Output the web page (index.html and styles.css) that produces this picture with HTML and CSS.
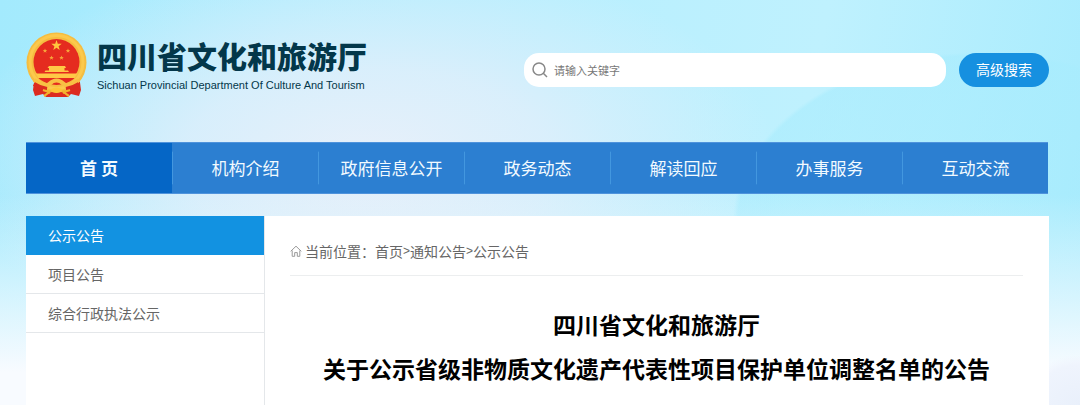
FILE: index.html
```html
<!DOCTYPE html>
<html lang="zh-CN">
<head>
<meta charset="utf-8">
<meta name="viewport" content="width=device-width, initial-scale=1">
<title>四川省文化和旅游厅</title>
<link rel="stylesheet" href="styles.css">
</head>
<body>
<div class="page">
  <header class="header">
    <a class="brand" href="#">
      <svg class="emblem" viewBox="0 0 62 66" aria-hidden="true">
        <path d="M9 43 7 58 9 64 17 62 20 65H42L45 62 53 64 55 58 53 43Z" fill="#dc2b20"/>
        <circle cx="30.500" cy="30.500" r="30" fill="#f5bd40"/>
        <circle cx="30.500" cy="30" r="26.500" fill="none" stroke="#fcc94c" stroke-width="3"/>
        <circle cx="30.500" cy="30" r="23" fill="#e52b1f"/>
        <path d="M30.500 8l1.300 3.700 3.900.1-3.100 2.400 1.100 3.800-3.200-2.200-3.200 2.200 1.100-3.800-3.100-2.400 3.900-.1z" fill="#ffc63e"/>
        <path d="M19 16.500l.6 1.500 1.700.1-1.300 1 .4 1.600-1.400-.9-1.400.9.400-1.600-1.300-1 1.700-.1zM42 16.500l.6 1.500 1.700.1-1.300 1 .4 1.600-1.400-.9-1.400.9.400-1.600-1.300-1 1.700-.1zM25.500 23.500l.6 1.500 1.700.1-1.300 1 .4 1.600-1.400-.9-1.400.9.400-1.600-1.300-1 1.700-.1zM35.500 23.500l.6 1.500 1.700.1-1.300 1 .4 1.600-1.400-.9-1.400.9.400-1.600-1.300-1 1.700-.1z" fill="#f7a53a"/>
        <path d="M23 34h16l1 2h-1.500v2.500H42l1 1.500H18.500l1-1.500H23V36h-1.500z" fill="#ffc846"/>
        <path d="M9.500 41.500h42l-3 4.500h-36z" fill="#ffc846"/>
        <path d="M12.500 46c4 4 9 5.500 14.500 6h7c5.500-.5 10.500-2 14.500-6z" fill="#e52b1f"/>
        <path d="M8 48c4 3 7 4.500 12 5.500 4 0 4-5 10.500-5s6.500 5 10.500 5c5-1 8-2.500 12-5.500" fill="none" stroke="#f8c044" stroke-width="4"/>
        <path d="M8 52q6 4 13 5M53 52q-6 4-13 5" fill="none" stroke="#dc2b20" stroke-width="4"/>
        <path d="M25 58c1.500-3.500 9.500-3.500 11 0-1.500 4-9.500 4-11 0z" fill="#ffc335"/>
        <path d="M17 58c3 1 5 2 8 1.500M44 58c-3 1-5 2-8 1.500M18 64c2-1 3-3 6-3.500M43 64c-2-1-3-3-6-3.500" fill="none" stroke="#f3b22f" stroke-width="2"/>
      </svg>
      <span class="brand-text">
        <span class="brand-name">四川省文化和旅游厅</span>
        <span class="brand-sub">Sichuan Provincial Department Of Culture And Tourism</span>
      </span>
    </a>
    <form class="search" role="search">
      <label class="search-box">
        <svg class="search-icon" viewBox="0 0 16 16" aria-hidden="true"><circle cx="7" cy="7" r="6"/><path d="M11.300 11.300 15 15"/></svg>
        <input class="search-input" type="text" placeholder="请输入关键字" aria-label="请输入关键字">
      </label>
      <button class="search-button" type="button">高级搜索</button>
    </form>
  </header>
  <nav class="nav">
    <a class="nav-item nav-item-active" href="#">首 页</a>
    <a class="nav-item" href="#">机构介绍</a>
    <a class="nav-item" href="#">政府信息公开</a>
    <a class="nav-item" href="#">政务动态</a>
    <a class="nav-item" href="#">解读回应</a>
    <a class="nav-item" href="#">办事服务</a>
    <a class="nav-item" href="#">互动交流</a>
  </nav>
  <div class="body">
    <aside class="side">
      <a class="side-item side-item-active" href="#">公示公告</a>
      <a class="side-item" href="#">项目公告</a>
      <a class="side-item" href="#">综合行政执法公示</a>
    </aside>
    <main class="content">
      <div class="crumbs">
        <svg class="home-icon" viewBox="0 0 12 12" aria-hidden="true"><path d="M.7 6.300 6 1.200l5.300 5.100M2.200 5.500v5.800h2.500V7.600h2.600v3.700h2.500V5.500"/></svg>
        <span>当前位置：</span>
        <a href="#">首页</a><span class="crumbs-sep">&gt;</span><a href="#">通知公告</a><span class="crumbs-sep">&gt;</span><a href="#">公示公告</a>
      </div>
      <h1 class="title">四川省文化和旅游厅<br>关于公示省级非物质文化遗产代表性项目保护单位调整名单的公告</h1>
    </main>
  </div>
</div>
</body>
</html>
```
FILE: styles.css
```css
* {
  box-sizing: border-box;
}

body {
  margin: 0;
  font-family: "Noto Sans CJK SC", sans-serif;
  font-size: 14px;
  color: #666;
}

a {
  color: inherit;
  text-decoration: none;
}

.page {
  display: flex;
  flex-direction: column;
  min-height: 100vh;
  padding: 0 31px 0 26px;
  background:
    radial-gradient(ellipse 60px 50px at 100% 100%, #e9f0fb 0, #eff4fd 80%, transparent 100%),
    linear-gradient(to bottom, transparent 48%, #f8fbff 92%),
    radial-gradient(ellipse 250px 170px at 91% 222px, #a8ecfd44 0, #a8ecfd99 98%, transparent 100%),
    radial-gradient(ellipse 38% 52% at 34% 40%, #e8f0fa 0, #e2effbcc 45%, transparent 100%),
    linear-gradient(100deg, #a3eafd 0, #b0edfe 25%, #b8effe 48%, #bff1fe 72%, #a6ebfd 100%);
}

.header {
  display: flex;
  align-items: flex-start;
  justify-content: space-between;
  height: 142px;
}

.brand {
  display: flex;
  gap: 9px;
  padding-top: 32px;
  color: #03374a;
}

.emblem {
  width: 62px;
  height: 66px;
}

.brand-text {
  display: flex;
  flex-direction: column;
  padding-top: 4px;
}

.brand-name {
  font-size: 30px;
  font-weight: 900;
  line-height: 38px;
}

.brand-sub {
  font-family: "Liberation Sans", Arial, sans-serif;
  font-size: 11px;
  line-height: 22px;
}

.search {
  display: flex;
  gap: 13px;
  width: 525px;
  padding-top: 53px;
}

.search-box {
  display: flex;
  flex: 1;
  align-items: center;
  gap: 6px;
  height: 34px;
  padding: 0 8px;
  border-radius: 15px;
  background: #fff;
}

.search-icon {
  width: 16px;
  height: 16px;
  fill: none;
  stroke: #888;
  stroke-width: 1.5;
}

.search-input {
  flex: 1;
  min-width: 0;
  padding: 0;
  border: 0;
  outline: 0;
  background: transparent;
  font-family: inherit;
  font-size: 11px;
  color: #666;
}

.search-input::placeholder {
  color: #777;
}

.search-button {
  width: 90px;
  height: 34px;
  padding: 0 0 2px;
  border: 0;
  border-radius: 17px;
  background: #1690e0;
  font-family: inherit;
  font-size: 14px;
  color: #fff;
}

.nav {
  display: grid;
  grid-template-columns: repeat(7, 1fr);
  margin-right: 1px;
  border: solid #4f93dc;
  border-width: 1px 0;
  background: #2c7fd1;
}

.nav-item {
  padding: 10px 0;
  border-left: 1px solid;
  border-image: linear-gradient(transparent 18%, #4397df 19%, #4397df 81%, transparent 82%) 1;
  font-size: 17px;
  line-height: 30px;
  text-align: center;
  color: #f2faff;
}

.nav-item-active {
  border: 0;
  background: #0566c6;
  font-weight: 700;
}

.body {
  display: grid;
  flex: 1;
  grid-template-columns: 239px 1fr;
  margin-top: 22px;
  background: #fff;
}

.side {
  border-right: 1px solid #e4e7ea;
}

.side-item {
  display: block;
  padding: 0 22px;
  border-bottom: 1px solid #e4e7ea;
  line-height: 38px;
}

.side-item-active {
  border-color: #1292e1;
  background: #1292e1;
  color: #fff;
}

.content {
  padding: 16px 26px 0 25px;
}

.crumbs {
  display: flex;
  align-items: center;
  padding-bottom: 5px;
  border-bottom: 1px solid #eceeef;
  line-height: 38px;
}

.home-icon {
  width: 12px;
  height: 12px;
  margin-right: 3px;
  fill: none;
  stroke: #999;
}

.crumbs-sep {
  font-family: "Liberation Sans", Arial, sans-serif;
  font-size: 12px;
}

.title {
  margin: 26px 0 0;
  font-size: 23px;
  font-weight: 700;
  line-height: 44px;
  text-align: center;
  color: #000;
}
```
